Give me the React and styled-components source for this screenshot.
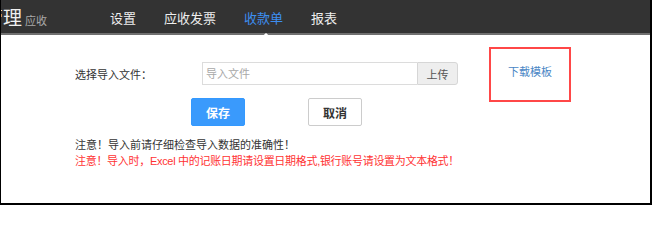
import React from "react";
import styled, { createGlobalStyle } from "styled-components";

const Global = createGlobalStyle`
  html, body { margin: 0; padding: 0; background: #fff; }
  body { font-family: "Liberation Sans", "Noto Sans CJK SC", sans-serif; }
  * { box-sizing: border-box; }
`;

const Frame = styled.div`
  width: 652px;
  height: 205px;
  border-left: 1px solid #000;
  border-right: 2px solid #000;
  border-bottom: 2px solid #000;
  overflow: hidden;
  background: #fff;
`;

const TopBar = styled.div`
  height: 35px;
  background: #333;
  border-bottom: 2px solid #707070;
  display: flex;
  align-items: center;
  padding-top: 4px;
`;

const Brand = styled.div`
  display: flex;
  align-items: baseline;
  margin-left: -17px;
  width: 126px;
  flex-shrink: 0;
`;

const BrandTitle = styled.span`
  font-size: 19px;
  color: #f0f0f0;
  line-height: 1;
`;

const BrandSub = styled.span`
  font-size: 11px;
  color: #aaa;
  margin-left: 3px;
`;

const Nav = styled.nav`
  display: flex;
  gap: 28px;
`;

const NavItem = styled.a`
  position: relative;
  font-size: 13px;
  line-height: 16px;
  color: ${(p) => (p.$active ? "#3d8ef0" : "#eeeeee")};
  text-decoration: none;
  white-space: nowrap;
  &::after {
    content: "";
    display: ${(p) => (p.$active ? "block" : "none")};
    position: absolute;
    left: 50%;
    bottom: -13px;
    margin-left: -6px;
    width: 0;
    height: 0;
    border-left: 8px solid transparent;
    border-right: 8px solid transparent;
    border-bottom: 7px solid #fff;
  }
`;

const Content = styled.div`
  padding: 27px 0 0 74px;
  display: flex;
  flex-direction: column;
`;

const FileRow = styled.div`
  display: flex;
  align-items: center;
  height: 23px;
`;

const Label = styled.span`
  width: 127px;
  font-size: 11px;
  color: #333;
`;

const InputGroup = styled.div`
  display: flex;
  height: 23px;
`;

const FileInput = styled.input`
  width: 215px;
  height: 23px;
  border: 1px solid #dcdcdc;
  border-right: none;
  padding: 0 3px;
  font-family: inherit;
  font-size: 11px;
  color: #333;
  outline: none;
  &::placeholder { color: #a8a8a8; }
`;

const UploadButton = styled.button`
  width: 41px;
  height: 23px;
  border: 1px solid #d6d6d6;
  border-radius: 0 3px 3px 0;
  background: #eeeeee;
  font-family: inherit;
  font-size: 11px;
  color: #555;
  padding: 0;
`;

const DownloadLink = styled.a`
  position: relative;
  margin-left: 50px;
  font-size: 11px;
  color: #4a86c5;
  text-decoration: none;
  line-height: 14px;
  margin-top: -4px;
  &::before {
    content: "";
    position: absolute;
    left: -19px;
    top: -18px;
    width: 78px;
    height: 51px;
    border: 2px solid #ff4747;
  }
`;

const ButtonRow = styled.div`
  display: flex;
  gap: 63px;
  margin-top: 13px;
  padding-left: 116px;
`;

const ActionButton = styled.button`
  width: 54px;
  height: 28px;
  padding: 0;
  border-radius: 2px;
  font-family: inherit;
  font-weight: bold;
  font-size: 12px;
  border: 1px solid ${(p) => (p.$primary ? "#3399ff" : "#cccccc")};
  background: ${(p) => (p.$primary ? "#3a9afc" : "#fff")};
  color: ${(p) => (p.$primary ? "#fff" : "#333")};
`;

const Notes = styled.div`
  margin-top: 11px;
  display: flex;
  flex-direction: column;
`;

const Note = styled.p`
  margin: 0;
  font-size: 11px;
  line-height: 16px;
  color: ${(p) => (p.$warn ? "#ff3333" : "#333")};
  letter-spacing: ${(p) => (p.$warn ? "-0.3px" : "0")};
  white-space: nowrap;
`;

export default function App() {
  return (
    <>
      <Global />
      <Frame>
        <TopBar>
          <Brand>
            <BrandTitle>管理</BrandTitle>
            <BrandSub>应收</BrandSub>
          </Brand>
          <Nav>
            <NavItem>设置</NavItem>
            <NavItem>应收发票</NavItem>
            <NavItem $active>收款单</NavItem>
            <NavItem>报表</NavItem>
          </Nav>
        </TopBar>
        <Content>
          <FileRow>
            <Label>选择导入文件：</Label>
            <InputGroup>
              <FileInput placeholder="导入文件" readOnly />
              <UploadButton>上传</UploadButton>
            </InputGroup>
            <DownloadLink>下载模板</DownloadLink>
          </FileRow>
          <ButtonRow>
            <ActionButton $primary>保存</ActionButton>
            <ActionButton>取消</ActionButton>
          </ButtonRow>
          <Notes>
            <Note>注意！导入前请仔细检查导入数据的准确性！</Note>
            <Note $warn>注意！导入时，Excel 中的记账日期请设置日期格式,银行账号请设置为文本格式！</Note>
          </Notes>
        </Content>
      </Frame>
    </>
  );
}
